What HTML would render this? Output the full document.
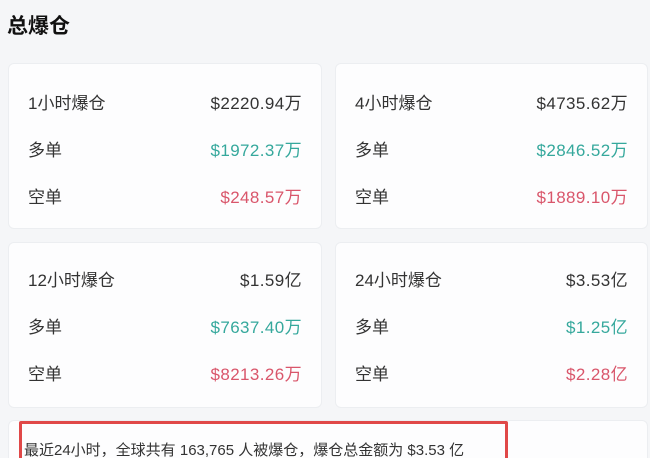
<!DOCTYPE html><html><head><style>
html,body{margin:0;width:650px;height:458px;overflow:hidden}
body{background:#f5f6f8;font-family:"Liberation Sans","Noto Sans CJK SC",sans-serif;color:#333;position:relative}
.t{position:absolute;left:7px;top:10px;font-size:21px;font-weight:bold;color:#111}
.c{position:absolute;background:#fdfdfe;border:1px solid #eceef1;border-radius:6px;box-sizing:border-box}
.r{position:absolute;left:19px;right:19px;font-size:17px;line-height:20px;display:flex;justify-content:space-between;color:#333}
.r span:last-child{letter-spacing:0.4px}
.g{color:#35a89c}.d{color:#d9566b}
.b{position:absolute;left:19px;top:421px;width:489px;height:45px;border:3px solid #e04848;border-radius:2px;box-sizing:border-box;font-size:15px;padding:15px 0 0 2px;color:#333;white-space:nowrap}
</style></head><body>
<div class="t">总爆仓</div>
<div class="c" style="left:8px;top:63px;width:314px;height:166px">
<div class="r" style="top:30px"><span>1小时爆仓</span><span>$2220.94万</span></div>
<div class="r" style="top:77px"><span>多单</span><span class="g">$1972.37万</span></div>
<div class="r" style="top:124px"><span>空单</span><span class="d">$248.57万</span></div></div>
<div class="c" style="left:335px;top:63px;width:313px;height:166px">
<div class="r" style="top:30px"><span>4小时爆仓</span><span>$4735.62万</span></div>
<div class="r" style="top:77px"><span>多单</span><span class="g">$2846.52万</span></div>
<div class="r" style="top:124px"><span>空单</span><span class="d">$1889.10万</span></div></div>
<div class="c" style="left:8px;top:242px;width:314px;height:166px">
<div class="r" style="top:28px"><span>12小时爆仓</span><span>$1.59亿</span></div>
<div class="r" style="top:75px"><span>多单</span><span class="g">$7637.40万</span></div>
<div class="r" style="top:122px"><span>空单</span><span class="d">$8213.26万</span></div></div>
<div class="c" style="left:335px;top:242px;width:313px;height:166px">
<div class="r" style="top:28px"><span>24小时爆仓</span><span>$3.53亿</span></div>
<div class="r" style="top:75px"><span>多单</span><span class="g">$1.25亿</span></div>
<div class="r" style="top:122px"><span>空单</span><span class="d">$2.28亿</span></div></div>
<div class="c" style="left:8px;top:420px;width:640px;height:60px"></div>
<div class="b">最近24小时，全球共有 163,765 人被爆仓，爆仓总金额为 $3.53 亿</div>
</body></html>
